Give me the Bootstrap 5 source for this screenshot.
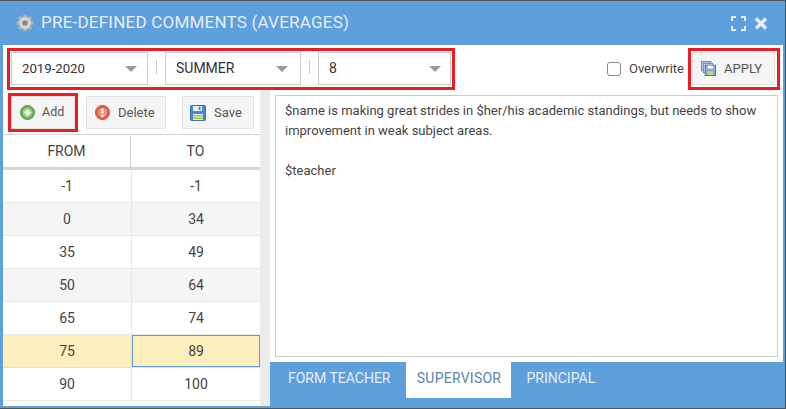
<!DOCTYPE html>
<html lang="en"><head><meta charset="utf-8">
<link href="https://cdn.jsdelivr.net/npm/bootstrap@5.3.0/dist/css/bootstrap.min.css" rel="stylesheet">
<style>
html,body{margin:0;height:409px;overflow:hidden;background:#5f9fdc}
body{font-family:Roboto,"Liberation Sans",sans-serif;font-size:13px;color:#444}
.win{height:409px;width:786px;position:relative;border:1px solid #555;border-width:1px 1px 1px 0;background:#5f9fdc;display:flex;flex-direction:column}
.win-head{height:44px;flex:none;color:#e4eefa;font-size:17px;letter-spacing:.22px;padding-left:16px;padding-right:18px}
.gear-ic{margin-right:7px;flex:none}
.close-ic{margin-left:9px}
.win-body{flex:1;background:#fff;margin:0 2px 2px 3px;display:flex;flex-direction:column;min-height:0}
.toolbar{height:45px;flex:none;padding:7px 8px 0 8px}
.fake-select{height:33px;border:1px solid #ccc;display:flex;align-items:center;justify-content:space-between;padding:0 10px 0 10px;font-size:14px;color:#333}
.fake-select::after{content:"";border:6px solid transparent;border-top:6px solid #999;border-bottom:0}
.sel-a{width:137px;font-size:13.2px}.sel-b{width:136px;padding-right:12px}.sel-c{width:133px;padding-right:9px}
.vsep{width:1px;height:14px;background:#ccc;margin:0 8px}
.ow-box{width:14px;height:14px;border:1px solid #888;border-radius:3px;background:#fff;margin-right:8px}
.tool-btn{border:1px solid #e3e3e3;background:#f5f5f5;color:#555;height:33px;display:flex;align-items:center;font-size:13px}
.apply-btn{width:83px;margin-left:8px;padding-left:8px;gap:8px}
.ow-wrap{height:33px}
.main{flex:1;min-height:0;display:flex}
.left-pane{width:257px;flex:none;display:flex;flex-direction:column;overflow:hidden}
.btn-row{height:45px;flex:none;padding:6px 6px 0 8px;border-bottom:1px solid #d4d4d4}
.b-add{width:64px;padding-left:8px;gap:7px;font-size:12.5px}.b-del{width:80px;margin-left:11px;padding-left:8px;gap:8px}.b-save{width:72px;margin-left:16px;padding-left:7px;gap:8px}
.grid-row{display:flex;height:33px;border-bottom:1px solid #e8e8e8;flex:none;font-size:14px}
.grid-row>div{flex:1;display:flex;align-items:center;justify-content:center}
.grid-row>div:first-child{border-right:1px solid #e8e8e8;width:129px;flex:none}
.grid-row.striped{background:#f5f5f5}
.grid-row.picked{background:#fdefbd;border-bottom-color:#f2e3ae}
.grid-row.picked>div:first-child{border-right-color:#f2e3ae}
.grid-row.picked>div:last-child{box-shadow:inset 0 0 0 1px #5f9fdc}
.grid-row.head-row{height:35px;background:#fff;border-bottom:3px solid #d4d4d4}
.grid-row.head-row>div:first-child{border-right:1px solid #d4d4d4;width:128px}
.gutter{width:10px;flex:none;background:#ebebeb}
.right-pane{flex:1;display:flex;flex-direction:column;min-width:0}
.comment-box{height:262px;flex:none;margin:5px;border:1px solid #ccc;padding:5px 9px;font-size:13px;line-height:20px;color:#444}
.tabs-bar{flex:1;background:#5f9fdc;color:#e4eefa;font-size:14px}
.tab-item{height:36px;display:flex;align-items:center;padding:0 18px 3px}
.tab-on{background:#fff;color:#5b85ad;padding:0 0 3px;margin:0 -3px 0 -2px;width:105px;justify-content:center;letter-spacing:.25px}
.red-mark{position:absolute;border:3px solid #ed1c24;pointer-events:none}
.mark-sel{left:7px;top:47px;width:448px;height:42px}
.mark-add{left:8px;top:92px;width:70px;height:39px}
.mark-apply{left:688px;top:47px;width:92px;height:42px}
</style></head><body>
<div class="win">
 <div class="win-head d-flex align-items-center">
  <svg class="gear-ic" width="18" height="18" viewBox="0 0 18 18"><g fill="#b0b0b0"><rect x="7" y="0.5" width="4" height="17" rx="1"/><rect x="7" y="0.5" width="4" height="17" rx="1" transform="rotate(45 9 9)"/><rect x="7" y="0.5" width="4" height="17" rx="1" transform="rotate(90 9 9)"/><rect x="7" y="0.5" width="4" height="17" rx="1" transform="rotate(135 9 9)"/></g><circle cx="9" cy="9" r="6" fill="#d6d6d6"/><circle cx="9" cy="9" r="2.8" fill="#8a8a8a"/></svg>
  <span>PRE-DEFINED COMMENTS (AVERAGES)</span>
  <svg class="ms-auto" width="15" height="15" viewBox="0 0 15 15" fill="none" stroke="#e4eefa" stroke-width="2"><path d="M1 5V1h4M10 1h4v4M14 10v4h-4M5 14H1v-4"/></svg>
  <svg class="close-ic" width="12" height="13" viewBox="0 0 12 13" stroke="#e4eefa" stroke-width="3.4"><path d="M1 1.5l10 10M11 1.5l-10 10"/></svg>
 </div>
 <div class="win-body">
  <div class="toolbar d-flex align-items-start">
   <div class="fake-select sel-a">2019-2020</div>
   <div class="vsep mt-2"></div>
   <div class="fake-select sel-b">SUMMER</div>
   <div class="vsep mt-2"></div>
   <div class="fake-select sel-c">8</div>
   <div class="ms-auto d-flex align-items-center">
    <div class="d-flex align-items-center ow-wrap"><span class="ow-box"></span><span>Overwrite</span></div>
    <div class="tool-btn apply-btn">
     <svg width="15" height="15" viewBox="0 0 16 16"><rect x=".5" y=".5" width="10" height="10" fill="#b8c8e8" stroke="#6f86b8"/><rect x="2.5" y="2.5" width="10" height="10" fill="#cfdcf2" stroke="#6f86b8"/><rect x="4.5" y="4.5" width="11" height="11" fill="#8fa9d8" stroke="#4f6ea8"/><rect x="7" y="5" width="6" height="3" fill="#fff"/><rect x="7" y="11" width="6" height="4" fill="#b7d97c"/></svg>
     <span>APPLY</span>
    </div>
   </div>
  </div>
  <div class="main">
   <div class="left-pane">
    <div class="btn-row d-flex">
     <div class="tool-btn b-add"><svg width="15" height="15" viewBox="0 0 15 15"><circle cx="7.5" cy="7.5" r="7" fill="#6db35b" stroke="#4f9a43"/><circle cx="7.5" cy="7.5" r="4.6" fill="#9fd48e"/><path d="M7.5 4.5v6M4.5 7.5h6" stroke="#fff" stroke-width="2.2"/></svg><span>Add</span></div>
     <div class="tool-btn b-del"><svg width="15" height="15" viewBox="0 0 15 15"><circle cx="7.5" cy="7.5" r="7" fill="#e2604c" stroke="#d14a38"/><circle cx="7.5" cy="7.5" r="4.6" fill="#f0907d"/><path d="M7.5 3.5v5" stroke="#fff" stroke-width="2.2"/><circle cx="7.5" cy="11" r="1.2" fill="#fff"/></svg><span>Delete</span></div>
     <div class="tool-btn b-save"><svg width="16" height="16" viewBox="0 0 16 16"><rect x=".5" y=".5" width="15" height="15" rx="1" fill="#4f86d0" stroke="#3f6fb5"/><rect x="3" y="1" width="9" height="5" fill="#e8eef8"/><rect x="8.5" y="1.5" width="2" height="3.5" fill="#4f86d0"/><rect x="3" y="9" width="10" height="6" fill="#f4f8ec"/><rect x="3" y="10" width="10" height="1.5" fill="#8cc63f"/><rect x="3" y="12.5" width="10" height="1.5" fill="#8cc63f"/></svg><span>Save</span></div>
    </div>
    <div class="grid-row head-row"><div>FROM</div><div>TO</div></div>
    <div class="grid-row"><div>-1</div><div>-1</div></div>
    <div class="grid-row striped"><div>0</div><div>34</div></div>
    <div class="grid-row"><div>35</div><div>49</div></div>
    <div class="grid-row striped"><div>50</div><div>64</div></div>
    <div class="grid-row"><div>65</div><div>74</div></div>
    <div class="grid-row picked"><div>75</div><div>89</div></div>
    <div class="grid-row"><div>90</div><div>100</div></div>
   </div>
   <div class="gutter"></div>
   <div class="right-pane">
    <div class="comment-box">$name is making great strides in $her/his academic standings, but needs to show improvement in weak subject areas.<br><br>$teacher</div>
    <div class="tabs-bar d-flex align-items-start"><div class="tab-item">FORM TEACHER</div><div class="tab-item tab-on">SUPERVISOR</div><div class="tab-item">PRINCIPAL</div></div>
   </div>
  </div>
 </div>
 <div class="red-mark mark-sel"></div>
 <div class="red-mark mark-add"></div>
 <div class="red-mark mark-apply"></div>
</div>
</body></html>
